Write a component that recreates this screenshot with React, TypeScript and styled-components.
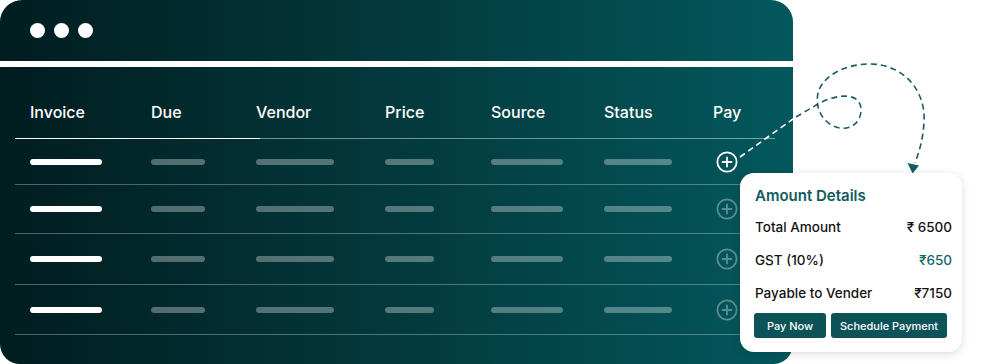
import styled, { createGlobalStyle } from "styled-components";

// ====================
// Data
// ====================
const columns = ["Invoice", "Due", "Vendor", "Price", "Source", "Status", "Pay"];
const barWidths = [72, 54, 78, 49, 72, 68];
const rowHeights = [46, 49, 51, 50];

const GlobalStyle = createGlobalStyle`
    html, body {
        margin: 0;
        padding: 0;
        background: #ffffff;
    }
    body {
        font-family: Inter, "Noto Sans", "DejaVu Sans", sans-serif;
    }
`;

const PlusCircle = ({ active }: { active: boolean }) => (
    <PlusIcon viewBox="0 0 22 22" $active={active}>
        <circle cx="11" cy="11" r="9.6" fill="none" stroke="currentColor" strokeWidth="1.8" />
        <path d="M11 6.5v9M6.5 11h9" stroke="currentColor" strokeWidth="1.8" strokeLinecap="round" />
    </PlusIcon>
);

const Connector = () => (
    <ConnectorSvg viewBox="0 0 981 364" width="981" height="364">
        <path d="M740 157 L793 119" fill="none" stroke="#ffffff" strokeWidth="1.6" strokeDasharray="6 4" />
        <path
            d="M796 117 L818 104 C838 93 862 92 861 111 C860 126 846 131 836 127 C822 122 815 108 818 93 C823 75 846 64 870 64 C903 64 926 90 924 122 C923 140 919 152 915 163"
            fill="none"
            stroke="#175c62"
            strokeWidth="1.6"
            strokeDasharray="6 4"
        />
        <polygon points="907.5,163 919,165.5 912.5,173.5" fill="#175c62" />
    </ConnectorSvg>
);

export default function App() {
    return (
        <>
            <GlobalStyle />
            <Stage>
                <Window>
                    <TitleBar>
                        <Dot />
                        <Dot />
                        <Dot />
                    </TitleBar>
                    <Body>
                        <HeaderRow>
                            {columns.map((c) => (
                                <HeaderCell key={c}>{c}</HeaderCell>
                            ))}
                        </HeaderRow>
                        {rowHeights.map((h, i) => (
                            <Row key={i} $height={h}>
                                {barWidths.map((w, j) => (
                                    <Cell key={j}>
                                        <Bar $width={w} $bright={j === 0} />
                                    </Cell>
                                ))}
                                <Cell>
                                    <PlusCircle active={i === 0} />
                                </Cell>
                            </Row>
                        ))}
                    </Body>
                </Window>

                <Connector />

                <DetailsCard>
                    <CardTitle>Amount Details</CardTitle>
                    <DetailRow>
                        <span>Total Amount</span>
                        <Amount>₹ 6500</Amount>
                    </DetailRow>
                    <DetailRow>
                        <span>GST (10%)</span>
                        <Amount $accent>₹650</Amount>
                    </DetailRow>
                    <DetailRow>
                        <span>Payable to Vender</span>
                        <Amount>₹7150</Amount>
                    </DetailRow>
                    <Buttons>
                        <ActionButton $width={72}>Pay Now</ActionButton>
                        <ActionButton $width={116}>Schedule Payment</ActionButton>
                    </Buttons>
                </DetailsCard>
            </Stage>
        </>
    );
}

const Stage = styled.div`
    position: relative;
    width: 981px;
    height: 364px;
    overflow: hidden;
`;

const Window = styled.div`
    width: 793px;
    height: 364px;
    display: flex;
    flex-direction: column;
    gap: 6px;
`;

const panel = `
    background: linear-gradient(90deg, #011d20 0%, #03363a 45%, #03585d 100%);
`;

const TitleBar = styled.div`
    ${panel}
    height: 61px;
    border-radius: 22px 22px 0 0;
    display: flex;
    align-items: center;
    gap: 9px;
    padding-left: 30px;
    box-sizing: border-box;
`;

const Dot = styled.span`
    width: 15px;
    height: 15px;
    border-radius: 50%;
    background: #ffffff;
`;

const Body = styled.div`
    ${panel}
    flex: 1;
    border-radius: 0 0 20px 20px;
    padding: 0 18px 0 15px;
`;

const gridCols = `
    display: grid;
    grid-template-columns: 136px 105px 129px 106px 113px 109px 1fr;
`;

const HeaderRow = styled.div`
    ${gridCols}
    height: 72px;
    align-items: end;
    padding-bottom: 17px;
    box-sizing: border-box;
    background: linear-gradient(90deg, #ffffff 0 245px, rgba(255, 255, 255, 0.45) 245px) no-repeat
        left bottom / 100% 1px;
`;

const HeaderCell = styled.div`
    color: #ffffff;
    font-size: 16px;
    font-weight: 500;
    line-height: 20px;
    &:first-child {
        padding-left: 15px;
    }
`;

const Row = styled.div<{ $height: number }>`
    ${gridCols}
    height: ${(p) => p.$height}px;
    align-items: center;
    box-sizing: border-box;
    border-bottom: 1px solid rgba(255, 255, 255, 0.3);
`;

const Cell = styled.div`
    display: flex;
    align-items: center;
    &:first-child {
        padding-left: 15px;
    }
`;

const Bar = styled.span<{ $width: number; $bright: boolean }>`
    width: ${(p) => p.$width}px;
    height: 6px;
    border-radius: 3px;
    background: ${(p) => (p.$bright ? "#ffffff" : "rgba(255, 255, 255, 0.32)")};
`;

const PlusIcon = styled.svg<{ $active: boolean }>`
    width: 22px;
    height: 22px;
    margin-left: 3px;
    color: ${(p) => (p.$active ? "#ffffff" : "rgba(255, 255, 255, 0.35)")};
`;

const ConnectorSvg = styled.svg`
    position: absolute;
    left: 0;
    top: 0;
    pointer-events: none;
`;

const DetailsCard = styled.div`
    position: absolute;
    left: 740px;
    top: 173px;
    width: 222px;
    height: 179px;
    box-sizing: border-box;
    padding: 12px 10px 14px 15px;
    background: #ffffff;
    border-radius: 14px;
    box-shadow: 0 2px 10px rgba(0, 0, 0, 0.14);
    display: flex;
    flex-direction: column;
`;

const CardTitle = styled.div`
    color: #0f5a60;
    font-size: 15px;
    font-weight: 600;
    line-height: 22px;
    margin-bottom: 3px;
`;

const DetailRow = styled.div`
    height: 33px;
    display: flex;
    align-items: center;
    justify-content: space-between;
    font-size: 13.5px;
    font-weight: 500;
    color: #141414;
`;

const Amount = styled.span<{ $accent?: boolean }>`
    color: ${(p) => (p.$accent ? "#13686e" : "#141414")};
`;

const Buttons = styled.div`
    display: flex;
    gap: 5px;
    margin-top: 4px;
    margin-left: -1px;
`;

const ActionButton = styled.button<{ $width: number }>`
    width: ${(p) => p.$width}px;
    height: 25px;
    border: 0;
    outline: 0;
    border-radius: 3px;
    background: #0b5358;
    color: #ffffff;
    font-family: Inter, "Noto Sans", sans-serif;
    font-size: 11px;
    font-weight: 500;
    padding: 0;
`;
